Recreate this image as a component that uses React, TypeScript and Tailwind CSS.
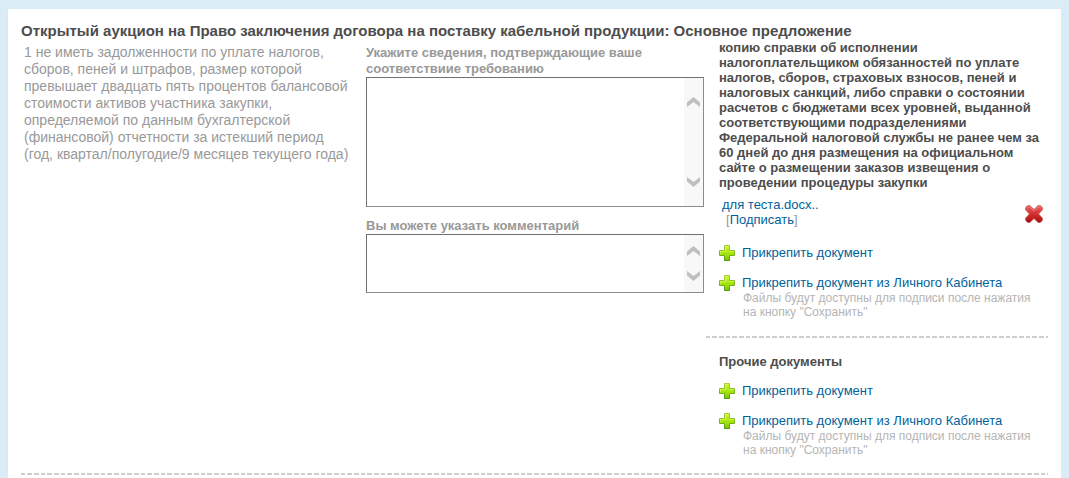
import React, { useId } from 'react';

const PlusIcon: React.FC = () => (
  <svg className="w-4 h-4 shrink-0" viewBox="0 0 16 16" aria-hidden="true">
    <defs>
      <linearGradient id="plusFill" x1="0" y1="0" x2="0" y2="1">
        <stop offset="0" stopColor="#d0f53a" />
        <stop offset="0.5" stopColor="#a8e60e" />
        <stop offset="1" stopColor="#7cc80a" />
      </linearGradient>
      <linearGradient id="plusEdge" x1="0" y1="0" x2="0" y2="1">
        <stop offset="0" stopColor="#a4d034" />
        <stop offset="0.6" stopColor="#78b41c" />
        <stop offset="1" stopColor="#4c960c" />
      </linearGradient>
    </defs>
    <path
      d="M5.5 0.5h5v5h5v5h-5v5h-5v-5h-5v-5h5z"
      fill="url(#plusFill)"
      stroke="url(#plusEdge)"
      strokeLinejoin="round"
    />
    <path
      d="M6.5 6.5v-5h3M1.5 9v-2.5h5M10 6.5h4.5"
      fill="none"
      stroke="#dcf96a"
      strokeOpacity="0.7"
    />
  </svg>
);

const DeleteIcon: React.FC = () => (
  <svg className="w-[18px] h-[18px]" viewBox="0 0 18 18" aria-hidden="true">
    <defs>
      <linearGradient id="deleteFill" x1="0" y1="0" x2="0" y2="1">
        <stop offset="0" stopColor="#e86464" />
        <stop offset="0.45" stopColor="#d83434" />
        <stop offset="1" stopColor="#a80c0c" />
      </linearGradient>
    </defs>
    <path
      d="M4.8 0.5L9 4.4 13.2 0.5Q15 0 16.5 1.5T17.5 4.8L13.6 9 17.5 13.2Q18 15 16.5 16.500T13.2 17.500L9 13.600 4.800 17.500Q3 18 1.500 16.500T0.500 13.200L4.400 9 0.500 4.800Q0 3 1.500 1.500T4.800 0.500z"
      fill="url(#deleteFill)"
      stroke="#bc4444"
      strokeWidth="0.6"
    />
    <path d="M2 3.500Q3 1.500 4.500 2L9 6 13.500 2Q15 1.500 16 3.500" fill="none" stroke="#f29a9a" strokeOpacity="0.6" />
  </svg>
);

const Chevron: React.FC<{ down?: boolean }> = ({ down }) => (
  <svg className="w-[13px] h-[10px]" viewBox="0 0 13 10" aria-hidden="true">
    <path
      d={down ? 'M0 0L6.5 5 13 0V4.5L6.5 10 0 4.5z' : 'M0 10L6.5 5 13 10V5.5L6.5 0 0 5.5z'}
      fill="#bfbfbf"
    />
  </svg>
);

const Divider: React.FC = () => (
  <div className="h-[2px] bg-[repeating-linear-gradient(90deg,#cfcfcf_0_4px,transparent_4px_6px,#cfcfcf_6px_11px,transparent_11px_13px,#cfcfcf_13px_18px,transparent_18px_20px)]" />
);

interface TextFieldProps {
  label: string;
  boxClass: string;
  scrollClass: string;
}

const TextField: React.FC<TextFieldProps> = ({ label, boxClass, scrollClass }) => {
  const id = useId();

  return (
    <div>
      <label htmlFor={id} className="block text-[13px] leading-4 font-bold text-[#999]">
        {label}
      </label>
      <div className={`flex border border-[#8c8c8c] border-t-[#707070] border-l-[#707070] ${boxClass}`}>
        <textarea id={id} className="flex-1 min-w-0 resize-none p-1 text-[13px] outline-none" />
        <div className={`w-[19px] flex flex-col items-center justify-between bg-[#f8f8f8] ${scrollClass}`}>
          <Chevron />
          <Chevron down />
        </div>
      </div>
    </div>
  );
};

const AttachLinks: React.FC = () => (
  <div className="space-y-[14px] text-[13px] leading-4">
    <div className="flex gap-[7px]">
      <PlusIcon />
      <a href="#" className="text-[#00629b]">
        Прикрепить документ
      </a>
    </div>
    <div className="flex gap-[7px]">
      <PlusIcon />
      <div>
        <a href="#" className="text-[#00629b]">
          Прикрепить документ из Личного Кабинета
        </a>
        <p className="pl-px text-xs leading-[14px] text-[#b5b5b5]">
          Файлы будут доступны для подписи после нажатия
          <br />
          на кнопку "Сохранить"
        </p>
      </div>
    </div>
  </div>
);

export default function App() {
  return (
    <div className="min-h-screen flex bg-[#daecf6] px-[7px] pt-[9px] font-['Liberation_Sans',Arial,sans-serif]">
      <main className="flex-1 bg-white border-x border-[#e3e6e8] px-[13px] pt-3 pb-[3px]">
        <h1 className="text-[15px] leading-[19px] font-bold text-[#4d4d4d]">
          Открытый аукцион на Право заключения договора на поставку кабельной продукции: Основное
          предложение
        </h1>

        <div className="grid grid-cols-[345fr_338fr_344fr]">
          <p className="pt-1 pl-[3px] text-sm leading-[17px] text-[#999]">
            1 не иметь задолженности по уплате налогов,
            <br />
            сборов, пеней и штрафов, размер которой
            <br />
            превышает двадцать пять процентов балансовой
            <br />
            стоимости активов участника закупки,
            <br />
            определяемой по данным бухгалтерской
            <br />
            (финансовой) отчетности за истекший период
            <br />
            (год, квартал/полугодие/9 месяцев текущего года)
          </p>

          <div className="pt-[5px] space-y-[11px]">
            <TextField
              label="Укажите сведения, подтверждающие ваше соответствиие требованию"
              boxClass="h-[130px]"
              scrollClass="py-[19px]"
            />
            <TextField
              label="Вы можете указать комментарий"
              boxClass="h-[59px]"
              scrollClass="py-[11px]"
            />
          </div>

          <div className="pl-[2px]">
            <section className="pl-[13px]">
              <h2 className="text-[13px] leading-[15px] font-bold text-[#4d4d4d]">
                копию справки об исполнении
                <br />
                налогоплательщиком обязанностей по уплате
                <br />
                налогов, сборов, страховых взносов, пеней и
                <br />
                налоговых санкций, либо справки о состоянии
                <br />
                расчетов с бюджетами всех уровней, выданной
                <br />
                соответствующими подразделениями
                <br />
                Федеральной налоговой службы не ранее чем за
                <br />
                60 дней до дня размещения на официальном
                <br />
                сайте о размещении заказов извещения о
                <br />
                проведении процедуры закупки
              </h2>

              <div className="mt-[7px] mb-[18px] flex items-center justify-between pl-[3px] pr-[5px] text-[13px] leading-[15px] text-[#999]">
                <div>
                  <a href="#" className="block text-[#00629b]">
                    для теста.docx..
                  </a>
                  <div className="pl-1">
                    [
                    <a href="#" className="text-[#00629b]">
                      Подписать
                    </a>
                    ]
                  </div>
                </div>
                <button type="button" aria-label="Удалить" className="mt-1">
                  <DeleteIcon />
                </button>
              </div>

              <AttachLinks />
            </section>

            <div className="mt-[17px]">
              <Divider />
            </div>

            <section className="pl-[13px] pt-4">
              <h2 className="mb-[14px] text-[13px] leading-[15px] font-bold text-[#4d4d4d]">
                Прочие документы
              </h2>
              <AttachLinks />
            </section>
          </div>
        </div>

        <div className="mt-4">
          <Divider />
        </div>
      </main>
    </div>
  );
}
